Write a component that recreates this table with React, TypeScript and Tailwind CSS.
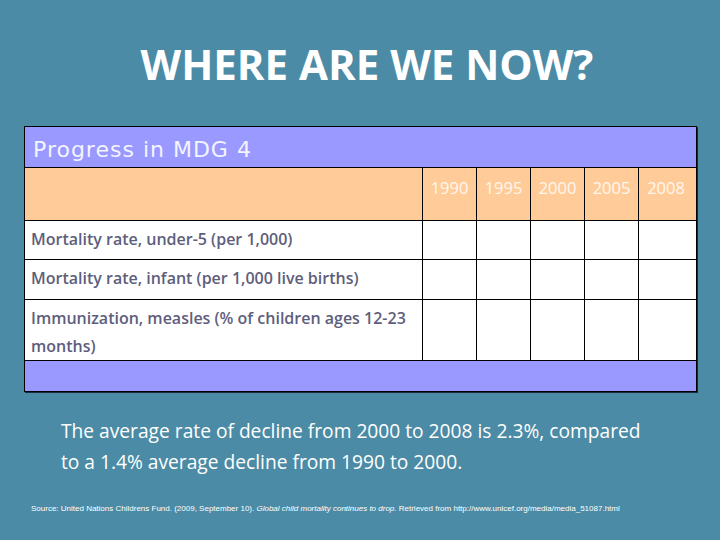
const years = ['1990', '1995', '2000', '2005', '2008'];

const rows = [
  { label: 'Mortality rate, under-5 (per 1,000)', h: 'h-[39px]' },
  { label: 'Mortality rate, infant (per 1,000 live births)', h: 'h-[40px]' },
  { label: 'Immunization, measles (% of children ages 12-23 months)', h: 'h-[61px]' },
];

export default function App() {
  return (
    <div className="w-[720px] h-[540px] bg-[#4b8ba5] overflow-hidden flex flex-col">
      <h1 className="mt-[36px] pl-[14px] text-center text-white font-bold text-[42px] leading-[56px] font-['Open_Sans',sans-serif]">
        WHERE ARE WE NOW?
      </h1>

      <div className="mt-[34px] ml-[24px] w-[673px] border border-black shadow-[1px_1px_0_#1a2a40]">
        <div className="h-[41px] bg-[#9999ff] border-b border-black flex items-center pl-[8px] pt-[4px] text-[22px] tracking-[1px] text-[#f4f4ff] font-['DejaVu_Sans',sans-serif]">
          Progress in MDG 4
        </div>
        <div className="h-[53px] bg-[#ffcc99] border-b border-black flex">
          <div className="w-[398px] border-r border-black" />
          {years.map((y, i) => (
            <div
              key={y}
              className={`w-[54px] flex items-center justify-center pb-[12px] text-[16.5px] text-[#fff7ee] font-['Open_Sans',sans-serif] ${i < 4 ? 'border-r border-black' : ''}`}
            >
              {y}
            </div>
          ))}
        </div>
        {rows.map((r) => (
          <div key={r.label} className={`${r.h} bg-white border-b border-black flex`}>
            <div className="w-[398px] border-r border-black pl-[6px] pt-[4px] pr-[8px] text-[16px] font-semibold leading-[28px] text-[#5e5e7c] font-['Open_Sans',sans-serif]">
              {r.label}
            </div>
            {years.map((y, i) => (
              <div key={y} className={`w-[54px] ${i < 4 ? 'border-r border-black' : ''}`} />
            ))}
          </div>
        ))}
        <div className="h-[30px] bg-[#9999ff]" />
      </div>

      <p className="mt-[23px] ml-[61px] w-[595px] text-white text-[19.2px] leading-[31px] font-['Open_Sans',sans-serif]">
        The average rate of decline from 2000 to 2008 is 2.3%, compared to a 1.4% average decline from 1990 to 2000.
      </p>

      <p className="mt-[27px] ml-[31px] text-white text-[8px] leading-[10px] font-['Liberation_Sans',sans-serif] whitespace-nowrap">
        Source: United Nations Childrens Fund. (2009, September 10). <i>Global child mortality continues to drop.</i> Retrieved from http://www.unicef.org/media/media_51087.html
      </p>
    </div>
  );
}
